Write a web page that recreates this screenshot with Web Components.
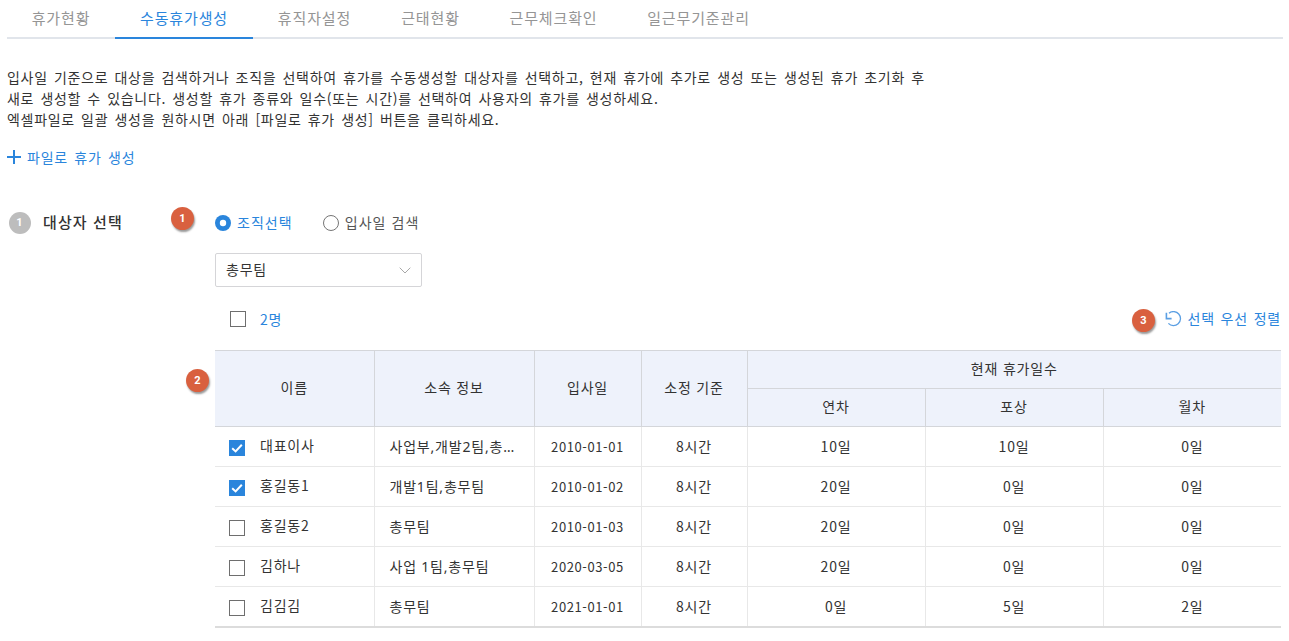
<!DOCTYPE html>
<html lang="ko">
<head>
<meta charset="utf-8">
<style>
  html, body { margin: 0; padding: 0; background: #fff; overflow: hidden; }
  body { font-family: "Noto Sans CJK KR", "Noto Sans", sans-serif; color: #333; }
</style>
</head>
<body>
<leave-page></leave-page>
<script>
const FONT = '"Noto Sans CJK KR", "Noto Sans", sans-serif';

class TabBar extends HTMLElement {
   constructor() {
      super();
      this.attachShadow({ mode: 'open' });
   }
   connectedCallback() {
      const tabs = [['휴가현황', 108], ['수동휴가생성', 138], ['휴직자설정', 123], ['근태현황', 109], ['근무체크확인', 137], ['일근무기준관리', 153]];
      const active = 1;
      this.shadowRoot.innerHTML = `
         <style>
            :host { display: flex; height: 39px; box-sizing: border-box; margin: 0 6px 0 7px; border-bottom: 2px solid #e1e5eb; }
            .tab { box-sizing: border-box; height: 39px; text-align: center; font-size: 15px; letter-spacing: 0.87px; line-height: 36px; color: #959595; border-bottom: 2px solid transparent; }
            .tab.on { color: #2a85dc; border-bottom-color: #2a85dc; }
         </style>
         ${tabs.map((t, i) => `<div class="tab ${i === active ? 'on' : ''}" style="width:${t[1]}px">${t[0]}</div>`).join('')}
      `;
   }
}

class NumBadge extends HTMLElement {
   constructor() {
      super();
      this.attachShadow({ mode: 'open' });
      this.shadowRoot.innerHTML = `
         <style>
            :host { position: absolute; width: 23px; height: 23px; border-radius: 50%; background: #d9603f; color: #fff; font: bold 11px "Roboto", sans-serif; line-height: 23px; text-align: center; box-shadow: 1px 2px 2px rgba(0,0,0,.4); }
         </style>
         <slot></slot>
      `;
   }
}

class CheckBox extends HTMLElement {
   constructor() {
      super();
      this.attachShadow({ mode: 'open' });
   }
   connectedCallback() {
      const on = this.hasAttribute('checked');
      this.shadowRoot.innerHTML = `
         <style>
            :host { display: block; width: 16px; height: 16px; flex: none; }
            svg { display: block; }
         </style>
         ${on
            ? '<svg width="16" height="16" viewBox="0 0 16 16"><rect width="16" height="16" fill="#2a85dc"/><path d="M3.2 8.2 6.6 11.4 12.8 4.8" fill="none" stroke="#fff" stroke-width="2"/></svg>'
            : '<svg width="16" height="16" viewBox="0 0 16 16"><rect x=".5" y=".5" width="15" height="15" fill="#fff" stroke="#6e6e6e"/></svg>'}
      `;
   }
}

class RadioOption extends HTMLElement {
   constructor() {
      super();
      this.attachShadow({ mode: 'open' });
   }
   connectedCallback() {
      const on = this.hasAttribute('checked');
      this.shadowRoot.innerHTML = `
         <style>
            :host { display: flex; align-items: center; gap: 6px; font-size: 14px; letter-spacing: 1.05px; color: ${on ? '#2a85dc' : '#555'}; }
            svg { display: block; flex: none; }
            span { margin-bottom: 2px; }
         </style>
         ${on
            ? '<svg width="16" height="16" viewBox="0 0 16 16"><circle cx="8" cy="8" r="8" fill="#2a85dc"/><circle cx="8" cy="8" r="3.2" fill="#fff"/></svg>'
            : '<svg width="16" height="16" viewBox="0 0 16 16"><circle cx="8" cy="8" r="7.5" fill="#fff" stroke="#757575"/></svg>'}
         <span><slot></slot></span>
      `;
   }
}

class SelectBox extends HTMLElement {
   constructor() {
      super();
      this.attachShadow({ mode: 'open' });
      this.shadowRoot.innerHTML = `
         <style>
            :host { display: flex; align-items: center; justify-content: space-between; box-sizing: border-box; width: 207px; height: 34px; padding: 0 10px; border: 1px solid #d5d5d8; border-radius: 2px; font-size: 14px; letter-spacing: 0.8px; color: #333; }
            svg { display: block; }
            span { margin-bottom: 2px; }
         </style>
         <span><slot></slot></span>
         <svg width="12" height="7" viewBox="0 0 12 7"><path d="M.7.7 6 6 11.3.7" fill="none" stroke="#a8a8a8"/></svg>
      `;
   }
}

class LeaveTable extends HTMLElement {
   constructor() {
      super();
      this.attachShadow({ mode: 'open' });
   }
   connectedCallback() {
      const rows = [
         ['대표이사', '사업부,개발2팀,총무팀', '2010-01-01', '8시간', '10일', '10일', '0일', true],
         ['홍길동1', '개발1팀,총무팀', '2010-01-02', '8시간', '20일', '0일', '0일', true],
         ['홍길동2', '총무팀', '2010-01-03', '8시간', '20일', '0일', '0일', false],
         ['김하나', '사업 1팀,총무팀', '2020-03-05', '8시간', '20일', '0일', '0일', false],
         ['김김김', '총무팀', '2021-01-01', '8시간', '0일', '5일', '2일', false],
      ];
      this.shadowRoot.innerHTML = `
         <style>
            :host { display: block; font-size: 14px; letter-spacing: 0.8px; color: #333; }
            table { border-collapse: collapse; table-layout: fixed; width: 1066px; }
            th { background: #eef2fb; font-weight: normal; border: 1px solid #d4d6da; height: 34px; padding: 0 0 3px; }
            th:first-child { border-left: 0; }
            th:last-child { border-right: 0; }
            td { height: 38px; padding: 0 0 1px; border: 1px solid #e8e8e8; text-align: center; }
            td:first-child { border-left: 0; }
            td:last-child { border-right: 0; }
            tbody tr:last-child td { border-bottom: 2px solid #dcdcdc; }
            .name { display: flex; align-items: center; padding-left: 14px; gap: 15px; }
            .name span { position: relative; top: -1px; }
            .name check-box { position: relative; top: 2px; }
            .org { text-align: left; padding-left: 15px; padding-right: 12px; white-space: nowrap; overflow: hidden; text-overflow: ellipsis; font-family: "Noto Sans", "Noto Sans CJK KR", sans-serif; }
            .date { font-size: 13px; letter-spacing: 0.6px; }
         </style>
         <table>
            <colgroup>
               <col style="width:159px"><col style="width:160px"><col style="width:107px"><col style="width:106px">
               <col style="width:178px"><col style="width:178px"><col style="width:178px">
            </colgroup>
            <thead>
               <tr><th rowspan="2">이름</th><th rowspan="2">소속 정보</th><th rowspan="2">입사일</th><th rowspan="2">소정 기준</th><th colspan="3">현재 휴가일수</th></tr>
               <tr><th>연차</th><th>포상</th><th>월차</th></tr>
            </thead>
            <tbody>
               ${rows.map(r => `<tr>
                  <td><div class="name"><check-box ${r[7] ? 'checked' : ''}></check-box><span>${r[0]}</span></div></td>
                  <td class="org">${r[1]}</td><td class="date">${r[2]}</td><td>${r[3]}</td><td>${r[4]}</td><td>${r[5]}</td><td>${r[6]}</td>
               </tr>`).join('')}
            </tbody>
         </table>
      `;
   }
}

class LeavePage extends HTMLElement {
   constructor() {
      super();
      this.attachShadow({ mode: 'open' });
   }
   connectedCallback() {
      this.shadowRoot.innerHTML = `
         <style>
            :host { display: block; position: relative; height: 641px; overflow: hidden; font-family: ${FONT}; }
            .intro { margin: 28px 0 0 7px; font-size: 14px; line-height: 21px; letter-spacing: 0.7px; word-spacing: 1.6px; color: #333; white-space: nowrap; }
            .add { display: flex; align-items: center; gap: 6px; margin: 17px 0 0 7px; height: 20px; font-size: 14px; letter-spacing: 0.8px; word-spacing: 1.6px; color: #2a85dc; }
            .add svg { display: block; }
            .step { display: flex; margin: 44px 0 0 9px; }
            .step-label { display: flex; width: 206px; flex: none; height: 24px; align-items: center; gap: 12px; font-size: 15px; font-weight: 500; letter-spacing: 1.1px; color: #333; }
            .step-label span { margin-bottom: 3px; }
            .step-num { width: 22px; height: 22px; border-radius: 50%; background: #bdbdbd; color: #fff; font: bold 11px/22px "Roboto", sans-serif; text-align: center; }
            .body { flex: 1; min-width: 0; }
            .radios { display: flex; gap: 30px; height: 24px; align-items: center; }
            select-box { margin-top: 18px; }
            .tools { display: flex; align-items: center; justify-content: space-between; height: 34px; margin-top: 15px; padding-left: 15px; width: 1051px; font-size: 14px; letter-spacing: 0.8px; word-spacing: 1px; color: #2a85dc; }
            .count { display: flex; align-items: center; gap: 14px; }
            .sort { display: flex; align-items: center; gap: 5px; }
            .sort span { margin-bottom: 2px; }
            .sort svg { display: block; }
            leave-table { margin-top: 14px; }
            num-badge.a { left: 171px; top: 207px; }
            num-badge.b { left: 186px; top: 369px; }
            num-badge.c { left: 1132px; top: 309px; }
         </style>
         <tab-bar></tab-bar>
         <div class="intro">입사일 기준으로 대상을 검색하거나 조직을 선택하여 휴가를 수동생성할 대상자를 선택하고, 현재 휴가에 추가로 생성 또는 생성된 휴가 초기화 후<br>새로 생성할 수 있습니다. 생성할 휴가 종류와 일수(또는 시간)를 선택하여 사용자의 휴가를 생성하세요.<br>엑셀파일로 일괄 생성을 원하시면 아래 [파일로 휴가 생성] 버튼을 클릭하세요.</div>
         <div class="add">
            <svg width="14" height="14" viewBox="0 0 14 14"><path d="M7 0v14M0 7h14" stroke="#2a85dc" stroke-width="2"/></svg>
            <span>파일로 휴가 생성</span>
         </div>
         <div class="step">
            <div class="step-label"><div class="step-num">1</div><span>대상자 선택</span></div>
            <div class="body">
               <div class="radios">
                  <radio-option checked>조직선택</radio-option>
                  <radio-option>입사일 검색</radio-option>
               </div>
               <select-box>총무팀</select-box>
               <div class="tools">
                  <div class="count"><check-box></check-box><span>2명</span></div>
                  <div class="sort">
                     <svg width="17" height="16" viewBox="0 0 17 16"><path d="M4 2.2A7 7 0 1 1 3.4 12.4" fill="none" stroke="#5b9fe3" stroke-width="1.3"/><path d="M1.4 1.8V7.6H6.6" fill="none" stroke="#5b9fe3" stroke-width="1.6"/></svg>
                     <span>선택 우선 정렬</span>
                  </div>
               </div>
               <leave-table></leave-table>
            </div>
         </div>
         <num-badge class="a">1</num-badge>
         <num-badge class="b">2</num-badge>
         <num-badge class="c">3</num-badge>
      `;
   }
}

customElements.define('num-badge', NumBadge);
customElements.define('check-box', CheckBox);
customElements.define('radio-option', RadioOption);
customElements.define('select-box', SelectBox);
customElements.define('tab-bar', TabBar);
customElements.define('leave-table', LeaveTable);
customElements.define('leave-page', LeavePage);
</script>
</body>
</html>
